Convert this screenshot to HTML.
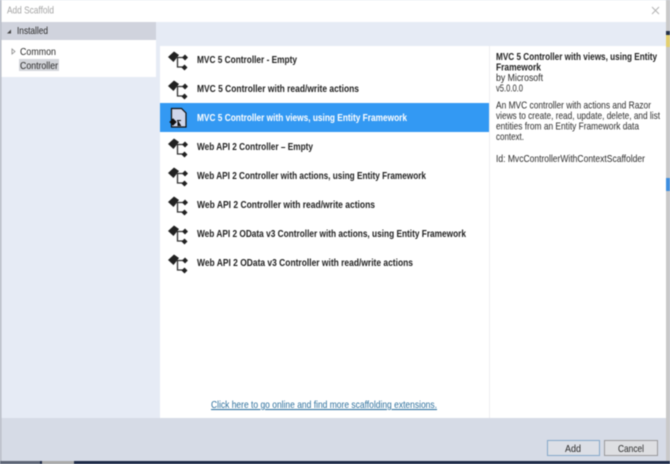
<!DOCTYPE html>
<html><head><meta charset="utf-8"><style>
html,body{margin:0;padding:0;width:670px;height:464px;overflow:hidden;background:#d6dbe6}
svg{display:block;filter:blur(.45px)}
text{font-family:"Liberation Sans",sans-serif;font-size:10.5px;fill:#2a2a2a}
.b{font-weight:bold;fill:#1f1f1f;font-size:10.5px}
</style></head><body>
<svg width="670" height="464" viewBox="0 0 670 464" xmlns="http://www.w3.org/2000/svg">
<defs>
<g id="ic">
<path d="M168 57l6-5.500 5 3.500-5.500 7z" fill="#222"/>
<path d="M176 57.500h8M177.500 57.500v9.500h6" fill="none" stroke="#333" stroke-width="1.300"/>
<path d="M182 57.500l3-3 3 3-3 3z" fill="#222"/>
<path d="M181.500 67.500l3-3 3 3-3 3z" fill="#222"/>
</g>
</defs>
<rect width="670" height="464" fill="#d6dbe6"/>
<rect x="666" width="4" height="464" fill="#c9c9c9"/>
<rect x="666" y="31" width="4" height="4" fill="#26324a"/>
<rect x="666" y="35" width="4" height="12" fill="#e4cf6e"/>
<rect x="666" y="178" width="4" height="13" fill="#3f8fe0"/>
<rect x="0" width="666" height="22" fill="#fff"/>
<rect x="0" y="0" width="1.500" height="464" fill="#b9bdc6"/>
<rect x="1.500" y="22" width="664.500" height="396" fill="#e6ebf5"/>
<rect x="1.500" y="22" width="154.500" height="18" fill="#d0d3dd"/>
<rect x="1.500" y="40" width="154.500" height="37" fill="#fff"/>
<rect x="19" y="59" width="40" height="12" fill="#d3d5da"/>
<rect x="160" y="46" width="506" height="372" fill="#fff"/>
<rect x="489" y="46" width="1" height="372" fill="#eeeef2"/>
<rect x="160" y="103" width="329" height="29" fill="#3399f3"/>
<rect x="0" y="461" width="670" height="3" fill="#1d2a47"/>
<rect x="0" y="461" width="40" height="3" fill="#5c6474"/>
<rect x="42" y="461" width="32" height="3" fill="#a9a9a9"/>

<text x="7" y="13.500" textLength="47" lengthAdjust="spacingAndGlyphs" style="fill:#a4a4a4">Add Scaffold</text>
<path d="M652 7l7 7M659 7l-7 7" stroke="#b4b4b4" stroke-width="1" fill="none"/>

<path d="M7 33.500l4-4v4z" fill="#444"/>
<text x="17" y="34" textLength="31" lengthAdjust="spacingAndGlyphs">Installed</text>
<path d="M12 49v5l3-2.500z" fill="#fff" stroke="#888" stroke-width=".8"/>
<text x="20" y="55" textLength="36" lengthAdjust="spacingAndGlyphs">Common</text>
<text x="20" y="69" textLength="38" lengthAdjust="spacingAndGlyphs">Controller</text>

<use href="#ic"/>
<use href="#ic" y="29"/>
<path d="M171.500 108.500h10l4.500 4.500v14h-14.500z" fill="#cfd6ea" stroke="#111" stroke-width="1.200"/>
<path d="M170 122l3-3 3 3-3 3zM177 120.500h4M178 120.500v5h3" fill="#111" stroke="#111" stroke-width="1"/>
<use href="#ic" y="87"/>
<use href="#ic" y="116"/>
<use href="#ic" y="145"/>
<use href="#ic" y="174"/>
<use href="#ic" y="203"/>

<text class="b" x="197" y="63" textLength="100" lengthAdjust="spacingAndGlyphs">MVC 5 Controller - Empty</text>
<text class="b" x="197" y="92" textLength="162" lengthAdjust="spacingAndGlyphs">MVC 5 Controller with read/write actions</text>
<text class="b" x="197" y="121" textLength="210" lengthAdjust="spacingAndGlyphs" style="fill:#fff">MVC 5 Controller with views, using Entity Framework</text>
<text class="b" x="197" y="150" textLength="116" lengthAdjust="spacingAndGlyphs">Web API 2 Controller – Empty</text>
<text class="b" x="197" y="179" textLength="229" lengthAdjust="spacingAndGlyphs">Web API 2 Controller with actions, using Entity Framework</text>
<text class="b" x="197" y="208" textLength="178" lengthAdjust="spacingAndGlyphs">Web API 2 Controller with read/write actions</text>
<text class="b" x="197" y="237" textLength="269" lengthAdjust="spacingAndGlyphs">Web API 2 OData v3 Controller with actions, using Entity Framework</text>
<text class="b" x="197" y="266" textLength="216" lengthAdjust="spacingAndGlyphs">Web API 2 OData v3 Controller with read/write actions</text>

<text class="b" x="496" y="60" textLength="161" lengthAdjust="spacingAndGlyphs">MVC 5 Controller with views, using Entity</text>
<text class="b" x="496" y="70.500" textLength="45" lengthAdjust="spacingAndGlyphs">Framework</text>
<text x="496" y="81" textLength="47" lengthAdjust="spacingAndGlyphs">by Microsoft</text>
<text x="496" y="91.500" textLength="27" lengthAdjust="spacingAndGlyphs">v5.0.0.0</text>
<text x="496" y="108.500" textLength="155" lengthAdjust="spacingAndGlyphs">An MVC controller with actions and Razor</text>
<text x="496" y="119" textLength="164" lengthAdjust="spacingAndGlyphs">views to create, read, update, delete, and list</text>
<text x="496" y="129.500" textLength="143" lengthAdjust="spacingAndGlyphs">entities from an Entity Framework data</text>
<text x="496" y="140" textLength="28" lengthAdjust="spacingAndGlyphs">context.</text>
<text x="496" y="162" textLength="149" lengthAdjust="spacingAndGlyphs">Id: MvcControllerWithContextScaffolder</text>

<text x="211" y="408" textLength="226" lengthAdjust="spacingAndGlyphs" text-decoration="underline" style="fill:#2c6f9c">Click here to go online and find more scaffolding extensions.</text>

<rect x="547.500" y="440.500" width="52" height="15" fill="#dcdfe6" stroke="#86a9c9"/>
<rect x="604.500" y="440.500" width="53" height="15" fill="#dedfe2" stroke="#9a9a9c"/>
<text x="565" y="452" textLength="16" lengthAdjust="spacingAndGlyphs">Add</text>
<text x="618" y="452" textLength="26" lengthAdjust="spacingAndGlyphs">Cancel</text>
</svg>
</body></html>
